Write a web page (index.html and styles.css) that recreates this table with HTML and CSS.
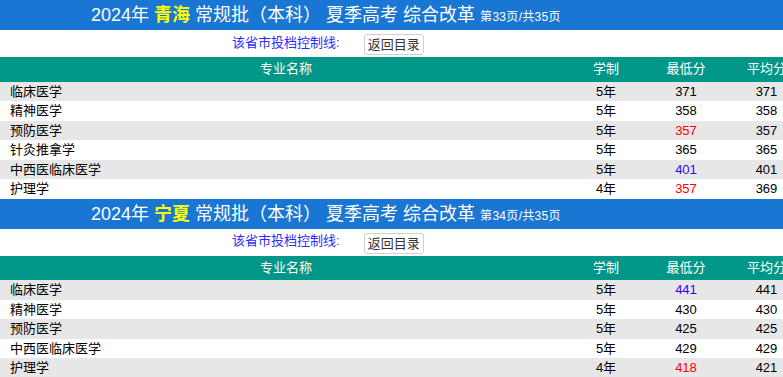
FILE: index.html
```html
<!DOCTYPE html>
<html lang="zh-CN">
<head>
<meta charset="utf-8">
<title>投档线</title>
<link rel="stylesheet" href="styles.css">
</head>
<body>
<section class="block">
  <div class="title"><span class="yr">2024年</span> <b class="prov">青海</b> 常规批（本科） 夏季高考 综合改革 <span class="pg">第33页/共35页</span></div>
  <div class="ctrl"><span class="ctrl-label">该省市投档控制线:</span><button class="back">返回目录</button></div>
  <table class="grid">
    <colgroup><col class="c-name"><col class="c-len"><col class="c-min"><col class="c-avg"></colgroup>
    <thead><tr><th>专业名称</th><th>学制</th><th>最低分</th><th>平均分</th></tr></thead>
    <tbody>
      <tr><td class="name">临床医学</td><td>5年</td><td>371</td><td>371</td></tr>
      <tr><td class="name">精神医学</td><td>5年</td><td>358</td><td>358</td></tr>
      <tr><td class="name">预防医学</td><td>5年</td><td class="red">357</td><td>357</td></tr>
      <tr><td class="name">针灸推拿学</td><td>5年</td><td>365</td><td>365</td></tr>
      <tr><td class="name">中西医临床医学</td><td>5年</td><td class="blue">401</td><td>401</td></tr>
      <tr><td class="name">护理学</td><td>4年</td><td class="red">357</td><td>369</td></tr>
    </tbody>
  </table>
</section>
<section class="block">
  <div class="title"><span class="yr">2024年</span> <b class="prov">宁夏</b> 常规批（本科） 夏季高考 综合改革 <span class="pg">第34页/共35页</span></div>
  <div class="ctrl"><span class="ctrl-label">该省市投档控制线:</span><button class="back">返回目录</button></div>
  <table class="grid">
    <colgroup><col class="c-name"><col class="c-len"><col class="c-min"><col class="c-avg"></colgroup>
    <thead><tr><th>专业名称</th><th>学制</th><th>最低分</th><th>平均分</th></tr></thead>
    <tbody>
      <tr><td class="name">临床医学</td><td>5年</td><td class="blue">441</td><td>441</td></tr>
      <tr><td class="name">精神医学</td><td>5年</td><td>430</td><td>430</td></tr>
      <tr><td class="name">预防医学</td><td>5年</td><td>425</td><td>425</td></tr>
      <tr><td class="name">中西医临床医学</td><td>5年</td><td>429</td><td>429</td></tr>
      <tr><td class="name">护理学</td><td>4年</td><td class="red">418</td><td>421</td></tr>
    </tbody>
  </table>
</section>
</body>
</html>
```

FILE: styles.css
```css
html, body {
  margin: 0;
  padding: 0;
  overflow: hidden;
  background: #ffffff;
}
body {
  font-family: "Liberation Sans", "Noto Sans CJK SC", sans-serif;
  font-size: 13px;
  color: #000;
  width: 801px;
}
.block {
  width: 801px;
}
.title {
  height: 30px;
  line-height: 30px;
  background: #1976d2;
  color: #ffffff;
  font-size: 18px;
  padding-left: 91px;
  white-space: nowrap;
}
.prov {
  color: #ffff00;
  font-weight: bold;
}
.pg {
  font-size: 12px;
  letter-spacing: 0.3px;
}
.ctrl {
  height: 27px;
  display: flex;
  align-items: center;
  padding-left: 232px;
  gap: 24px;
}
.ctrl-label {
  color: #2b2bff;
  font-size: 13px;
  line-height: 16px;
  margin-top: -2px;
}
.back {
  font-family: "Liberation Sans", "Noto Sans CJK SC", sans-serif;
  font-size: 13px;
  height: 21px;
  line-height: 19px;
  padding: 0 3px;
  border: 1px solid #d0d0d0;
  border-radius: 3px;
  background: #ffffff;
  color: #333;
  margin-top: 2px;
}
.grid {
  width: 801px;
  border-collapse: collapse;
  table-layout: fixed;
}
.c-name { width: 572px; }
.c-len { width: 68px; }
.c-min { width: 92px; }
.c-avg { width: 69px; }
.grid th {
  background: #009688;
  color: #ffffff;
  font-weight: normal;
  height: 24.5px;
  padding: 0;
  line-height: 16px;
  text-align: center;
}
.grid td {
  padding: 0;
  height: 19.5px;
  line-height: 19.5px;
  text-align: center;
  white-space: nowrap;
}
.grid td.name {
  text-align: left;
  padding-left: 10px;
}
.grid tbody tr:nth-child(odd) td {
  background: #e7e7e7;
}
.red { color: #ff0000; }
.blue { color: #3300ff; }
```
